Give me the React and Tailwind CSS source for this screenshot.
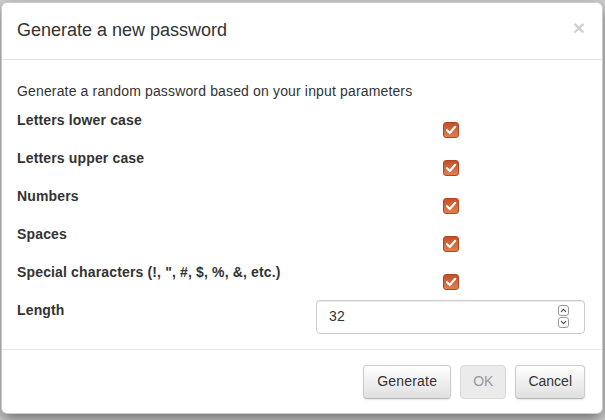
import React from 'react';

const OPTIONS = [
  'Letters lower case',
  'Letters upper case',
  'Numbers',
  'Spaces',
  'Special characters (!, ", #, $, %, &, etc.)',
];

function CheckBox() {
  return (
    <span className="flex items-center justify-center w-[16px] h-[16px] rounded-[3px] border border-[#b2461f] bg-gradient-to-b from-[#c4502a] to-[#e27d50]">
      <svg width="12" height="12" viewBox="0 0 12 12">
        <path d="M2 6.2 L4.8 9 L10.2 2.8" fill="none" stroke="#fff" strokeWidth="2.2" strokeLinecap="round" strokeLinejoin="round" />
      </svg>
    </span>
  );
}

function Spinner() {
  return (
    <div className="absolute right-[15px] top-[4px] flex flex-col gap-[1px]">
      <span className="flex items-center justify-center w-[11px] h-[11px] rounded-[3px] border border-[#9a9a9a] bg-white">
        <svg width="7" height="5" viewBox="0 0 7 5"><path d="M1 4 L3.5 1.3 L6 4" fill="none" stroke="#444" strokeWidth="1.1" /></svg>
      </span>
      <span className="flex items-center justify-center w-[11px] h-[11px] rounded-[3px] border border-[#9a9a9a] bg-white">
        <svg width="7" height="5" viewBox="0 0 7 5"><path d="M1 1 L3.5 3.7 L6 1" fill="none" stroke="#444" strokeWidth="1.1" /></svg>
      </span>
    </div>
  );
}

export default function App() {
  return (
    <div className="w-[605px] h-[420px] overflow-hidden bg-[#d3d3d3] pt-[2px] pl-[1px] font-['Liberation_Sans',Arial,sans-serif] text-[14px] text-[#333]">
      <div className="w-[602px] bg-white rounded-[6px] border border-black/20 shadow-[0_5px_15px_rgba(0,0,0,0.5)]">

        {/* header */}
        <div className="flex items-start justify-between pl-[15px] pr-[17px] py-[15px] border-b border-[#e5e5e5]">
          <h4 className="text-[18px] leading-[25.7px] font-normal text-[#333]">Generate a new password</h4>
          <span className="mt-[-1px] text-[21px] leading-[21px] font-bold text-black/20">×</span>
        </div>

        {/* body */}
        <div className="px-[15px] pt-[21px] pb-[15px] tracking-[0.15px]">
          <p className="leading-[20px] mb-[9px]">Generate a random password based on your input parameters</p>
          <div className="grid grid-cols-[299px_269px]">
            {OPTIONS.map((label) => (
              <React.Fragment key={label}>
                <div className="h-[38px] font-bold leading-[20px]">{label}</div>
                <div className="h-[38px] flex justify-center pt-[12px]">
                  <CheckBox />
                </div>
              </React.Fragment>
            ))}
            <div className="font-bold leading-[20px]">Length</div>
            <div className="relative h-[34px] border border-[#ccc] rounded-[4px] px-[12px] flex items-center shadow-[inset_0_1px_1px_rgba(0,0,0,0.075)]">
              <span className="text-[#333]">32</span>
              <Spinner />
            </div>
          </div>
        </div>

        {/* footer */}
        <div className="flex justify-end gap-[9px] pl-[15px] pr-[17px] pt-[15px] pb-[14px] border-t border-[#e5e5e5]">
          <button className="h-[34px] px-[13px] rounded-[4px] border border-[#ccc] border-b-[#b8b8b8] bg-gradient-to-b from-white to-[#e0e0e0] shadow-[0_1px_2px_rgba(0,0,0,0.1)] text-[#333] tracking-[0.2px]">
            Generate
          </button>
          <button disabled className="h-[34px] px-[12px] rounded-[4px] border border-[#d9d9d9] bg-[#ebebeb] text-[#999]">
            OK
          </button>
          <button className="h-[34px] px-[12px] rounded-[4px] border border-[#ccc] border-b-[#b8b8b8] bg-gradient-to-b from-white to-[#e0e0e0] shadow-[0_1px_2px_rgba(0,0,0,0.1)] text-[#333]">
            Cancel
          </button>
        </div>
      </div>
    </div>
  );
}
